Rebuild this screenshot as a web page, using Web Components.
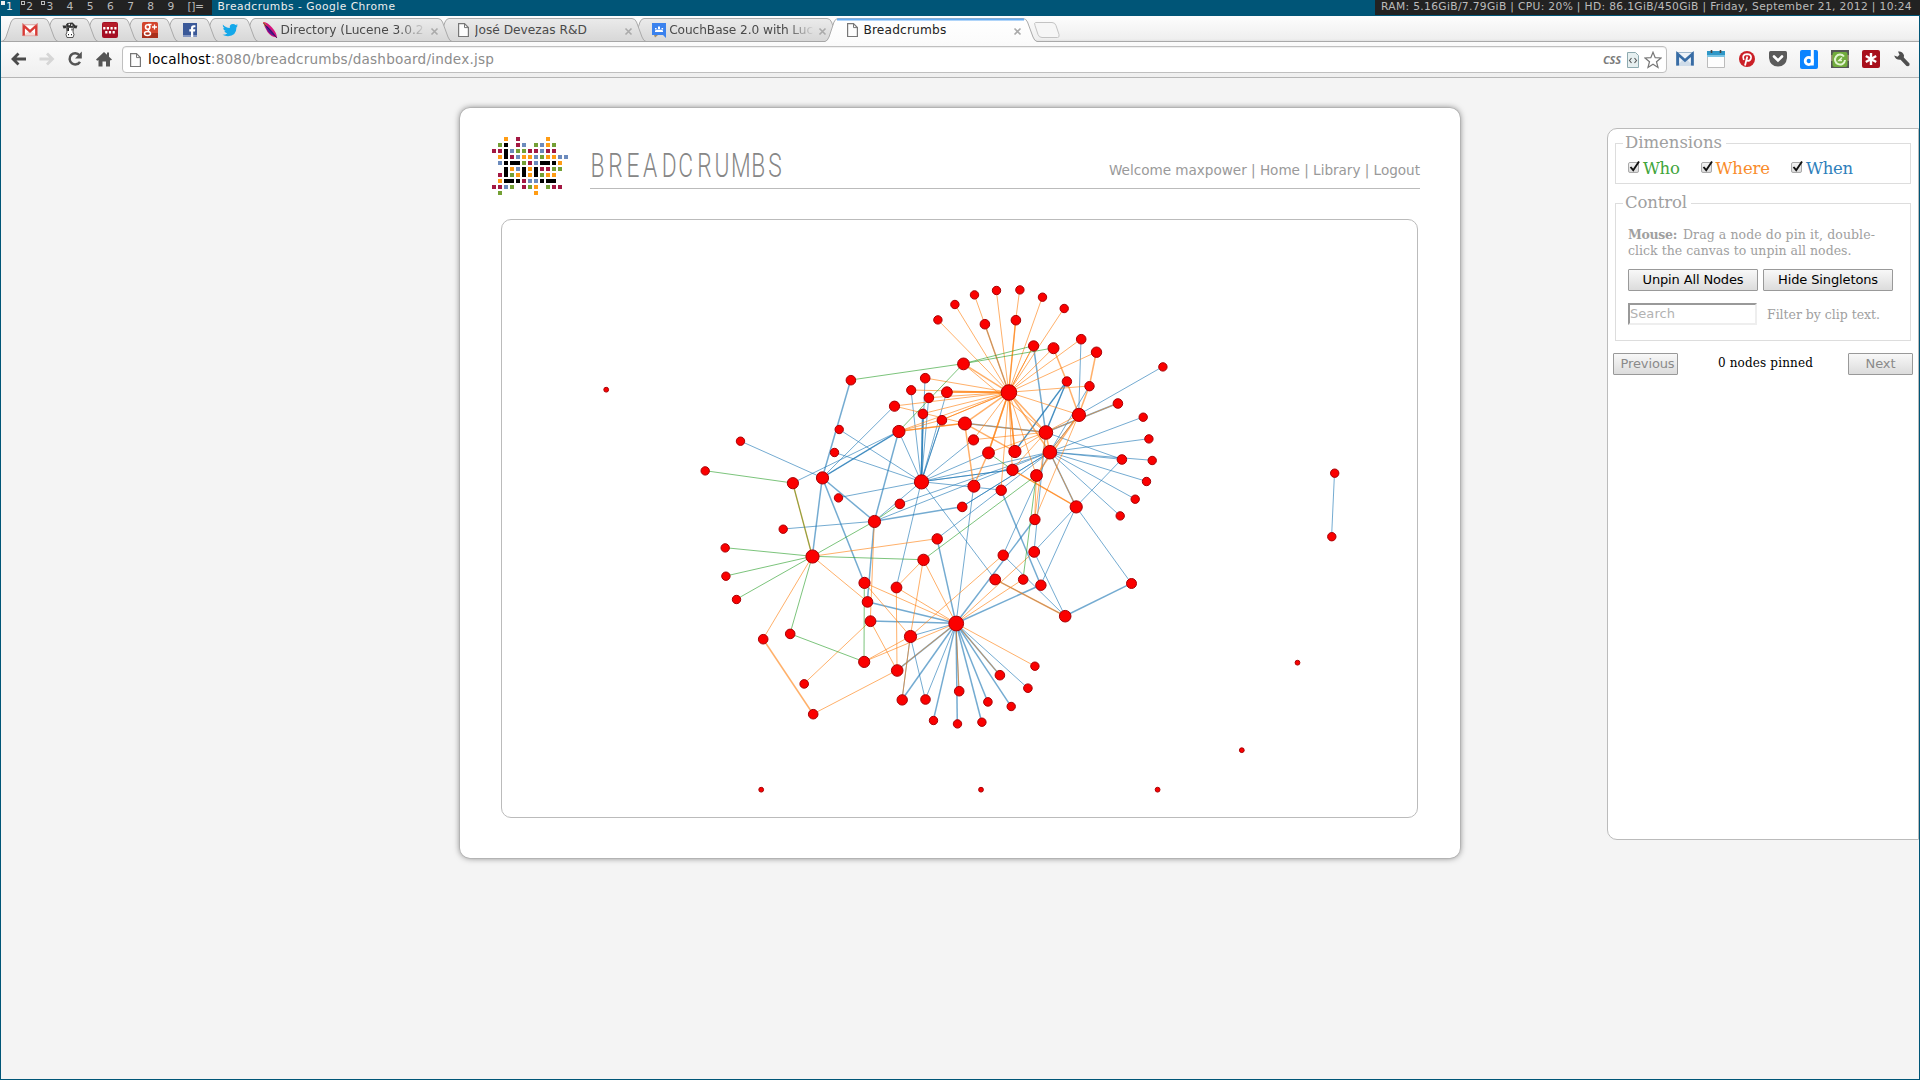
<!DOCTYPE html>
<html lang="en">
<head>
<meta charset="utf-8">
<title>Breadcrumbs</title>
<style>
html,body{margin:0;height:100%}
body{width:1920px;height:1080px;overflow:hidden;background:#057;font-family:"DejaVu Sans",sans-serif;display:flex;flex-direction:column}
</style>
</head>
<body>
<status-bar></status-bar>
<browser-window>
  <tab-strip slot="tabs">
    <browser-tab icon="gmail"></browser-tab>
    <browser-tab icon="cow"></browser-tab>
    <browser-tab icon="dots"></browser-tab>
    <browser-tab icon="gplus"></browser-tab>
    <browser-tab icon="facebook"></browser-tab>
    <browser-tab icon="twitter"></browser-tab>
    <browser-tab wide fade icon="feather"><fit-text w="143">Directory (Lucene 3.0.2</fit-text></browser-tab>
    <browser-tab wide icon="page"><fit-text w="112">José Devezas R&amp;D</fit-text></browser-tab>
    <browser-tab wide fade icon="group"><fit-text w="144">CouchBase 2.0 with Luc</fit-text></browser-tab>
    <browser-tab wide active icon="page"><fit-text w="83">Breadcrumbs</fit-text></browser-tab>
  </tab-strip>
  <tool-bar slot="tools"></tool-bar>
  <main-card>
    <bread-header slot="head"></bread-header>
    <node-graph></node-graph>
  </main-card>
  <side-panel></side-panel>
</browser-window>
<script>
const ICONS={
gmail:'<path fill="#fff" d="M1 3h14v11H1z"/><path fill="#f3d9d6" d="M2 13l6-5 6 5z"/><path fill="none" stroke="#d93b36" stroke-width="2.4" d="M1.7 14V3.6L8 9.3l6.3-5.7V14"/><path stroke="#d9908c" stroke-width=".8" d="M1 2.8h14M1 13.7h14"/>',
cow:'<path fill="#333" d="M4 2.500l1.500-1.500 5-.5 2 2 1 1.500-3 1-6 0z"/><path fill="#333" d="M.5 3.500l4 0v2.500l-3 .5zM15.500 3.500l-4 0v2.500l3 .5z"/><path fill="#fff" stroke="#444" stroke-width=".9" d="M4.500 5.500h7l-.5 4.500 1 2.500-1 3H5l-1-3 1-2.500z"/><path fill="#222" d="M5.200 6h1.800v3H5.200zM9.500 6.500h1v2h-1zM6 12h1v1.300H6zM9 12h1v1.300H9z"/><path fill="#fff" d="M6.500 1.800h1.500v1.500H6.500zM9 2.500h1.500v1.200H9z"/>',
dots:'<rect width="16" height="16" rx="2" fill="#a50f24"/><path fill="#c33" opacity=".4" d="M1 1h14v6H1z"/><path fill="#fff" d="M1.200 5h2.200v2.600H1.200zM4.800 5h2.200v2.600H4.800zM8.500 5h2.200v2.600H8.500zM12.300 5h2.200v2.600h-2.200zM3.200 9h2.200v2.600H3.200zM6.900 9h2.200v2.600H6.900zM10.600 9h2.200v2.600h-2.200z"/>',
gplus:'<rect width="16" height="16" rx="1.500" fill="#d3452d"/><path fill="#a9301c" d="M0 11h16v5H0z"/><g fill="none" stroke="#fff"><circle cx="5.700" cy="5" r="2.200" stroke-width="1.600"/><ellipse cx="5.500" cy="11.500" rx="3" ry="2" stroke-width="1.500"/><path stroke-width="1.300" d="M7.500 7.300q-2.500 1 0 2.500M6 2.500h3.500M10 5h5M12.500 2.500v5"/></g>',
facebook:'<path fill="#3b5998" d="M1 1h14v14H1z"/><path fill="#8295c0" d="M1 13h14v2H1z"/><path fill="#fff" d="M9 15V9.500H7.300V7.300H9V6q0-2.800 2.800-2.800h1.600v2.100h-1.200q-1 0-1 1v1h2.100l-.3 2.200h-1.800V15z"/>',
twitter:'<path fill="#14a8ea" d="M.8 2.500q2.800 3.400 7 3.500Q7.300 2 11 2q1.600 0 2.600 1l2-.8q-.3 1.200-1.300 1.800l1.600-.4-1.400 1.600Q14.300 14 6 14.200q-3.200 0-5.500-1.400 2.800.1 4.800-1.400-2.300-.3-3-2.300h1.400Q1.200 8.200 1.200 5.700l1.300.4Q.3 4.600.8 2.500z"/>',
feather:'<path d="M1 0q4-.3 9 5.500 4.500 5 5 10Q9 15 5.500 10 2.500 5 1 0z" fill="#d6127b"/><path d="M1 0q3 1 4 4l-2 1z" fill="#f08a24"/><path d="M2.500 2.500q6 3 11.500 12-5-1-8-5-2.500-4-3.500-7z" fill="#5a1694"/><path d="M1.500 1l13.500 15" stroke="#26134d" stroke-width=".8"/>',
page:'<path fill="#fdfdfd" stroke="#777" stroke-width="1.200" d="M2.600 1.600h5.900l3.900 3.900v9H2.600z"/><path fill="none" stroke="#777" d="M8.500 1.600v4h4"/>',
group:'<path fill="#3b82ee" d="M1 1h14v15l-3-3H1z"/><path fill="#a08d6b" d="M3 13h4l-3 2.500z"/><path fill="#fff" d="M4 8.500q4-2 8 0V10H4zM7 4.500h2v2.500H7zM4 6h1.600v1.600H4zM10.500 6h1.600v1.600h-1.600z"/>'
};
const def=(name,html,after)=>customElements.define(name,class extends HTMLElement{
  constructor(){super();const t=document.createElement('template');t.innerHTML=typeof html==='function'?html(this):html;this.attachShadow({mode:'open'}).append(t.content.cloneNode(true));}
  connectedCallback(){after&&after(this)}
});

/* Window manager bar */
def('status-bar',()=>`<style>
:host{display:flex;height:15px;margin-bottom:1px;flex:none;font:10.700px/11px "DejaVu Sans",sans-serif;color:#bbb;background:#057;justify-content:space-between}
.l{display:flex}.tags{display:flex;background:#222}
.tag{box-sizing:border-box;width:20.200px;text-align:center;padding:1px 1px 0 0;height:15px;background:#222;position:relative}
.sel{background:#057;color:#eee;width:20px}
.o::before{content:"";position:absolute;left:1px;top:1px;width:2px;height:2px;border:1px solid #bbb}
.sel.o::before{background:#eee;border-color:#eee}
.lay{padding:1px 8px 0 6px;width:16px}.t{padding:1px 0 0 6px;color:#eee}
.r{background:#222;padding:1px 8px 0 6px}
</style><div class="l"><div class="tags">${[1,2,3,4,5,6,7,8,9].map(n=>`<div class="tag ${n==1?'sel':''} ${n<4?'o':''}">${n}</div>`).join('')}<div class="lay"><fit-text w="16">[]=</fit-text></div></div><div class="t"><fit-text w="178">Breadcrumbs - Google Chrome</fit-text></div></div>
<div class="r"><fit-text w="531">RAM: 5.16GiB/7.79GiB | CPU: 20% | HD: 86.1GiB/450GiB | Friday, September 21, 2012 | 10:24</fit-text></div>`);

def('browser-window',`<style>
:host{display:flex;flex-direction:column;flex:1;margin:0 1px 1px;background:#f4f4f4;min-height:0}
.stage{display:flex;align-items:flex-start;padding-left:459px;gap:147px}
</style><slot name="tabs"></slot><slot name="tools"></slot><div class="stage"><slot></slot></div>`);

def('tab-strip',`<style>
:host{display:flex;height:26px;flex:none;padding-left:1px;background:linear-gradient(#fdfdfd,#efefef 23px,#e2e2e2 25px,#a9a9a9 25px);isolation:isolate;align-items:flex-end}
svg{display:block;margin:0 0 3px 12px}
</style><slot></slot><svg width="28" height="18"><path d="M2.500 1.500H19q3 0 4 3l3 9q.7 3-1.500 3H9q-3 0-4-3l-3-9q-1-3 .5-3z" fill="#f6f6f6" stroke="#c3c3c3"/></svg>`);

def('browser-tab',h=>{
 const a=h.hasAttribute('active'),w=h.hasAttribute('wide')?(a?212:210):56;
 const p=`M0 24.500Q2.500 24 4 20L9 5Q10.500 1.500 13 1.500H${w-14}Q${w-11} 1.500 ${w-9.5} 5L${w-4} 20Q${w-2.500} 24 ${w} 24.500`;
 return `<style>
:host{display:block;width:${w}px;height:25px;margin-right:${w>100?-15.700:-16}px;position:relative;flex:none;z-index:${a?30:0}}
.bg{position:absolute;inset:0;z-index:-1}
.c{display:flex;height:25px;box-sizing:border-box;padding:5px 0 0 20px}
.ic{width:16px;height:16px;flex:none}
.t{margin:1px 0 0 2.500px;width:145.500px;height:16px;overflow:hidden;font:12.200px/15px "DejaVu Sans",sans-serif;color:${a?'#222':'#4a4a4a'};white-space:nowrap;${h.hasAttribute('fade')?'-webkit-mask-image:linear-gradient(90deg,#000 118px,transparent 146px)':''}}
.x{width:9px;height:9px;margin:5px 0 0 ${a?4.500:3.500}px}
</style><svg class="bg" width="${w}" height="25"><defs><linearGradient id="g" x2="0" y2="1"><stop stop-color="${a?'#fff':'#ebebeb'}"/><stop offset="1" stop-color="${a?'#fbfbfb':'#d7d7d7'}"/></linearGradient></defs><path d="${p}${a?'V25H0z':'z'}" fill="url(#g)"/><path d="${p}" fill="none" stroke="#aaa"/>${a?`<path d="M12 2.500H${w-13}" stroke="#65acf3" stroke-width="2"/>`:`<path d="M0 24.500H${w}" stroke="#a6a6a6"/>`}</svg>
<div class="c"><svg class="ic" viewBox="0 0 16 16">${ICONS[h.getAttribute('icon')]}</svg>${w>100?`<div class="t"><slot></slot></div><svg class="x" viewBox="0 0 9 9"><path d="M1.500 1.500l6 6m0-6l-6 6" stroke="#aaa" stroke-width="1.600"/></svg>`:''}</div>`},
 e=>{if(!e.hasAttribute('active'))e.style.zIndex=20-[...e.parentNode.children].indexOf(e)});

def('tool-bar',`<style>
:host{display:flex;align-items:center;box-sizing:border-box;height:36px;flex:none;border-bottom:1px solid #b5b5b5;background:linear-gradient(#fbfbfb,#efefef);padding:0 7px 0 8px}
.nav{display:flex;gap:10.500px;margin-top:-1px;width:112px}
.box{box-sizing:border-box;display:flex;align-items:center;width:1545px;height:27px;border:1px solid #bfbfbf;border-radius:4px;background:#fff;padding:0 4px 0 5px;box-shadow:inset 0 1px 1px #eee;font:13.600px/20px "DejaVu Sans",sans-serif;color:#8c8c8c;margin-left:1px;flex:none}
b{font-weight:400;color:#000}.sp{flex:1}
.css{font:italic bold 11px/14px "Open Sans",sans-serif;color:#7b7b7b;margin-right:4px}
.ext{display:flex;gap:13px;margin-left:9px}
svg{flex:none;display:block}
</style><div class="nav">
<svg width="18" height="18" viewBox="0 0 18 18"><path d="M17 9H5M9.500 3.500L4 9l5.500 5.500" stroke="#4b4b4b" stroke-width="2.800" fill="none"/></svg>
<svg width="18" height="18" viewBox="0 0 18 18"><path d="M1.500 9h12M9 3.500L14.500 9 9 14.500" stroke="#d6d6d6" stroke-width="2.800" fill="none"/></svg>
<svg width="18" height="18" viewBox="0 0 18 18"><path d="M13.500 5.200A5.600 5.600 0 1 0 14 11.800" stroke="#555" stroke-width="2.500" fill="none"/><path fill="#555" d="M15.800 1.500v7H9z"/></svg>
<svg width="18" height="18" viewBox="0 0 18 18"><path d="M1 9.500l8-7.500 3 2.800V2.500h2v4.200l3 2.800-1.200 1L15 10v6.500h-4v-5H7.500v5H3.500V10l-1.300.8z" fill="#555"/></svg></div>
<div class="box"><svg width="16" height="16" viewBox="0 0 16 16">${ICONS.page}</svg><span style="margin:-1px 0 0 4px"><fit-text w="346"><b>localhost</b>:8080/breadcrumbs/dashboard/index.jsp</fit-text></span><span class="sp"></span><span class="css"><fit-text w="18">CSS</fit-text></span>
<svg width="16" height="18" viewBox="0 0 16 18"><path d="M2.500 1.500h8l3 3v12h-11z" fill="#e6eff0" stroke="#8eaab0"/><path d="M6.500 7L4.500 9.500l2 2.500m3-5l2 2.500-2 2.500" fill="none" stroke="#555" stroke-width="1.100"/></svg>
<svg width="18" height="18" viewBox="0 0 18 18" style="margin-left:3px"><path d="M9 1.200l2.200 5.500 5.800.3-4.500 3.700 1.500 5.800L9 13.300l-5 3.200 1.500-5.800L1 7l5.800-.3z" fill="#fff" stroke="#777" stroke-width="1.200"/></svg></div>
<div class="ext">
<svg width="18" height="18" viewBox="0 0 18 18"><path fill="#eef3f8" stroke="#9eb6cc" d="M.5 2.500h17v13H.5z"/><path d="M1 16l5.500-6L9 12l2.500-2L17 16z" fill="#cfdce9"/><path d="M1.700 15.500V4L9 10.500 16.300 4v11.500" fill="none" stroke="#386ca5" stroke-width="2.800"/></svg>
<svg width="18" height="18" viewBox="0 0 18 18"><path fill="#fdfdfd" stroke="#bbb" d="M.5 3.500h17v14H.5z"/><path fill="#2f97c7" d="M0 1h18v5H0z"/><path fill="#7cc4e3" d="M0 5h18v2H0z"/><path d="M4.500 0v3M13.500 0v3" stroke="#444" stroke-width="1.600"/></svg>
<svg width="18" height="18" viewBox="0 0 18 18"><circle cx="9" cy="9" r="8" fill="#cb2027"/><path d="M5.800 10Q3.500 4.500 9 4.200q4.500 0 4 3.700-.8 3.400-3.200 3-1-.2-1.200-1M9.300 6.500L7 15.500" stroke="#fff" stroke-width="1.800" fill="none"/></svg>
<svg width="18" height="18" viewBox="0 0 18 18"><path d="M0 2.500q0-1.500 1.500-1.500h15q1.500 0 1.500 1.500V8q-1 8.500-9 8.500T0 8z" fill="#5b5b5b"/><path d="M5 6.500l4 4 4-4" fill="none" stroke="#fff" stroke-width="2.600" stroke-linecap="round"/></svg>
<svg width="18" height="19" viewBox="0 0 18 19"><rect width="18" height="19" rx="2" fill="#0a84ff"/><path d="M12.300 0v15.500" stroke="#fff" stroke-width="3"/><circle cx="8.800" cy="11" r="3.600" fill="none" stroke="#fff" stroke-width="2.800"/></svg>
<svg width="18" height="18" viewBox="0 0 18 18"><path d="M0 0h18v18H0z" fill="#555"/><path d="M0 5h18v6H0z" fill="#987"/><rect x="1.500" y="2" width="15" height="15" rx="2" fill="#71ab3c"/><path d="M13 6.500a5 5 0 1 0 1 3.500" fill="none" stroke="#e2f4cf" stroke-width="2"/><path d="M11 10.500h-3l3-3" stroke="#e2f4cf" stroke-width="1.500" fill="none"/></svg>
<svg width="18" height="18" viewBox="0 0 18 18"><rect width="18" height="18" rx="2" fill="#a8101c"/><path d="M9 3v12M3.800 6l10.400 6M3.800 12l10.400-6" stroke="#fff" stroke-width="2.400"/></svg>
<svg width="18" height="18" viewBox="0 0 18 18"><path d="M1.200 5.500l3.300 1.300 2-2L5 1.500q4.500-.7 6 3.700L10.800 7.500l5.700 6q.8 2-1.300 2.800l-1.700-.3L7.600 9.700q-5.300.3-6.400-4.200z" fill="#4f4f4f"/></svg>
</div>`);

def('main-card',`<style>
:host{display:block;box-sizing:border-box;width:1000px;height:750px;margin-top:30px;background:#fff;border-radius:10px;box-shadow:0 0 0 .5px #aaa,0 0 6px #777;flex:none}
.b{padding:30px 0 0 41px}
</style><slot name="head"></slot><div class="b"><slot></slot></div>`);

const LOGO=['..O.M....O...','.GK.MB.GBOG..','MMKBGGMMBMM..','.OKMBOOBGOOBB','.BKKKGMBKKKO.','..KOBKOKMMGG.','.MKGOKOKGOO..','.OKKKMBBKKK..','MMBG.MGO.GMM.','.G.....O.....'];
const LC={O:'#ff9c14',M:'#a31843',G:'#74a035',B:'#6c8bbd',K:'#000'};
let cells='';
LOGO.forEach((r,y)=>[...r].forEach((c,x)=>{if(LC[c])cells+=`<rect x="${x*6}" y="${y*6}" width="4" height="4" fill="${LC[c]}"/>`}));
[[2,2,0,1],[3,4,1,0],[8,4,1,0],[2,5,0,1],[5,5,0,1],[7,5,0,1],[2,7,1,0],[9,7,1,0]].forEach(([x,y,a,b])=>cells+=`<rect x="${x*6}" y="${y*6}" width="${4+6*a}" height="${4+6*b}"/>`);
def('bread-header',`<style>
:host{display:flex;height:81px;padding-left:32px;align-items:flex-start}
.logo{margin-top:29px;flex:none}
.r{box-sizing:border-box;display:flex;justify-content:space-between;width:830px;height:81px;margin-left:18px;border-bottom:1px solid #bbb}
.t{margin-top:30px;overflow:visible}
.n{font:13.600px/20px "DejaVu Sans",sans-serif;color:#999;margin-top:52px}
text{font:300 32.500px "Roboto","Open Sans",sans-serif;fill:#868686}
</style><svg class="logo" width="80" height="60">${cells}</svg><div class="r"><svg class="t" width="210" height="50"><text transform="translate(.5 39) scale(.7 1)" x="0 25.500 51.400 75 101.800 125.500 152.500 177 200.800 229.500 254">BREADCRUMBS</text></svg><div class="n"><fit-text w="311">Welcome maxpower | Home | Library | Logout</fit-text></div></div>`);

/* Graph data: id, x, y, radius */
const NODES=`T1 937.7 319.7 4.4,T2 954.7 304.3 4.4,T3 974.3 294.7 4.4,T4 996.3 290.3 4.4,T5 1019.7 289.7 4.4,T6 1042.3 297 4.4,T7 1064 308.3 4.4,U1 984.7 324 5,U2 1015.700 320 5,V1 1033.400 345.700 5.300,V2 1053.300 348 5.700,V3 1081 339 5,V4 1096.300 352 5.400,P 963.300 363.700 6.100,H 1008.700 392.300 8,L1 925 378 5,L2 911 390 4.800,L3 928.700 397.700 5,L4 946.700 392 5.600,L5 894.300 406 5.300,L6 922.700 413.700 5,L7 941.700 420 5,Q 964.700 423.300 6.700,R 898.700 431.300 6.300,S1 973.300 439.700 5.300,S2 988.300 452.700 6.100,S3 1014.700 451.300 6.300,J 1045.700 432.300 7,K 1049.700 452 7,M 1078.700 414.700 6.800,N1 1066.700 381.300 4.900,N2 1089.300 386 4.900,E0 1162.700 366.700 4.400,E1 1117.700 403.300 5,E2 1143 417 4.400,E3 1148.700 438.700 4.400,E4 1152 460.300 4.400,E5 1121.700 459.300 5,E6 1146.300 481.300 4.400,E7 1135 499 4.400,E8 1120 515.700 4.400,C1 1012.300 469.700 5.900,C2 1036.300 475.300 6.100,B 921.300 481.700 7.300,D 973.700 486 6.200,D2 1001 490 5.400,F 899.700 503.700 5,G 962 506.700 5,X 1076 506.700 6.300,Y 874.300 521.300 6.300,Z 1034.700 519.300 5.400,W1 850.700 380 5,W2 839 429.300 4.400,W3 834.300 452.300 4.400,W 822.300 477.700 6.300,A 792.700 483 5.800,A1 740.300 441 4.400,A2 705 470.700 4.400,W4 838.300 497.700 4.400,Y1 783 529 4.400,g1 725 547.700 4.400,I 812.300 556.300 6.800,g2 725.700 576 4.400,g3 736.300 599.300 4.400,a 937 538.700 5.400,b 923.300 559.700 5.900,c 864.300 582.700 5.800,d 896.300 587.300 5.600,e 867.300 601.700 5.500,f 870.300 621 5.600,g 910.300 636.300 6.300,O 956 623.300 7.600,h 864 661.700 5.800,i 897 670.300 6,j 790 633.700 5,k 763 639 5,l 804 683.700 4.500,m 813 714 5,n1 902 699.700 5.400,n2 925.300 699.300 5,n3 959 691 5,n4 933.300 720.300 4.400,n5 957.300 723.700 4.400,n6 981.700 722 4.400,n7 987.700 701.700 4.500,n8 1011 706.300 4.400,n9 999.700 675 5,n10 1027.700 688 4.500,n11 1034.700 666 4.400,p 1003 555 5.400,q 1034 551.700 5.600,r 995 579.300 5.600,s 1023 579.300 5,t 1040.700 585 5.400,u 1065 616 6,v 1131.300 583.300 5.200,z1 606 389.500 2.600,z2 1334.500 473 4.400,z3 1331.600 536.500 4.400,z4 1297.300 662.500 2.600,z5 1241.600 750 2.600,z6 761 789.500 2.600,z7 980.800 789.500 2.600,z8 1157.400 789.500 2.600`;
/* Edge lists; a trailing * marks a heavier link */
const EDGES={
'#1f77b4':'V1-J* N1-J* N1-J N1-S3* N1-S3 V3-M E0-M E1-J* E2-K E3-K E4-K E5-K E6-K E7-K E8-K J-E5 K-X* X-E5 N2-K M-K Q-J* U1-H B-L1 B-L2 B-L3 B-L4 B-L6* B-L6* B-L7 B-L7 B-R B-S1 B-S2 B-C1 B-C1 B-D2 B-Y B-W2 B-W3 B-W4 B-d B-r Y-G* Y-K Y-W* Y-R* Y-Y1 Y-e* K-F K-G K-a K-B D-O D2-t* Z-O* J-q K-p X-q X-t X-v v-u* q-u p-u r-u t-O* a-O* e-O* f-O* g-O g-n1 g-n2 O-n1* O-n2 O-n4* O-n5* O-n3 O-n6* O-n7* O-n8* O-n9* O-n10 O-i* W-I* W-A1 W-W1* W-c* W-R* W-R A-R W-L5 G-K z2-z3',
'#ff7f0e':'H-T1 H-T2 H-T4 H-T6 H-T7 T3-U1 H-U1* T5-U2 H-U2* H-U2 H-V1 H-V2 H-V3 H-V4 H-N2 H-M H-P* P-J H-L1 H-L2 H-L3 H-L4* H-L4* H-L5 H-L6 H-L7 H-R L7-H R-L7 H-Q* H-S1 H-S2* H-S2* H-S3* H-S3* H-C1 H-J* H-K* H-C2 H-D2 S2-D* Q-D* Q-S3* Q-R* R-Q L5-Q J-S1 J-S2 J-C1 J-S3 J-K* J-M V2-N1* N1-M* V4-N2* N2-M* M-C2* M-K M-Z K-X C1-X* C1-X C2-Z J-Z E1-J I-a I-e I-k k-m* m-i b-O b-d b-g d-O d-i c-O c-g f-i f-l g-h O-h g-p O-q O-s r-u* O-n11 O-i g-n1 O-n3 O-n9 Y-f A-I* Q-J V1-H',
'#2ca02c':'W1-P P-V1 P-V2 P-R A-A2 A-I Y-I Y-F I-b I-g1 I-g2 I-g3 I-j j-h h-c C2-b C2-s S2-C1'
};
const N={};NODES.split(',').forEach(s=>{const [k,x,y,r]=s.split(' ');N[k]=[+x,+y,+r]});
let gs='';
for(const c in EDGES)for(const q of EDGES[c].split(' ')){const hv=q.endsWith('*');const [s,t]=q.replace('*','').split('-');
 gs+=`<line x1="${N[s][0]}" y1="${N[s][1]}" x2="${N[t][0]}" y2="${N[t][1]}" stroke="${c}" stroke-width="${hv?1.500:1}"/>`}
def('node-graph',`<style>
:host{display:block;box-sizing:border-box;width:917px;height:599px;border:1px solid #bbb;border-radius:10px}
svg{display:block}line{stroke-opacity:.62}circle{fill:#fb0000;stroke:#a80004;stroke-width:1}
</style><svg width="915" height="597" viewBox="502 220 915 597">${gs}${Object.values(N).map(n=>`<circle cx="${n[0]+.2}" cy="${n[1]+.2}" r="${n[2]-.2}"/>`).join('')}</svg>`);

def('tick-box',`<style>:host{display:block;width:12px;height:12px;flex:none}svg{display:block;overflow:visible}</style>
<svg width="12" height="12"><defs><linearGradient id="g" x2="0" y2="1"><stop stop-color="#f6f6f6"/><stop offset="1" stop-color="#d8d8d8"/></linearGradient></defs><rect x=".5" y=".5" width="10" height="10" rx="1.500" fill="url(#g)" stroke="#aaa"/><path d="M2.500 5l2.700 3.200L11 -.5" fill="none" stroke="#111" stroke-width="1.900"/></svg>`);
def('push-button',`<style>:host{display:flex;box-sizing:border-box;height:22px;border:1px solid #999;border-radius:1px;background:linear-gradient(#f8f8f8,#dcdcdc);align-items:center;justify-content:center;font:13px/20px "DejaVu Sans",sans-serif;color:#000;flex:none}:host([disabled]){color:#8a8a8a}</style><slot></slot>`);
def('side-panel',`<style>
:host{display:block;box-sizing:border-box;width:312px;height:712px;margin-top:50px;border:1px solid #bbb;border-radius:10px 0 0 10px;background:#fff;flex:none;padding:4px 5px 0;font-family:"DejaVu Serif",serif;color:#a0a0a0}
fieldset{box-sizing:border-box;margin:0 0 9px 2px;width:296px;min-width:0;height:51px;border:1px solid #ddd;padding:0 0 0 12px}
.f2{height:148px;margin-bottom:12px}
legend{margin-left:-5px;padding:0 4px 0 2px;font-size:16.500px;line-height:20px;height:20px}
.row{display:flex;align-items:center}
.dims{height:30px;gap:21px;font-size:16.500px}.dims div{display:flex;align-items:center;gap:3px}
.p{padding-top:14px;font-size:12.500px;line-height:16px}
.p div{height:16px;display:flex;gap:6px}
.bt{margin-top:10px;gap:5px}.se{margin-top:12px}
.in{box-sizing:border-box;width:129px;height:22px;border:2px solid;border-color:#999 #eee #eee #999;font:13px/17px "DejaVu Sans",sans-serif;color:#b2b2b2}
.fi{font-size:12.500px;margin-left:10px}
.ft{justify-content:space-between;font-size:12px;color:#000}
</style>
<fieldset><legend><fit-text w="97">Dimensions</fit-text></legend><div class="row dims">
<div style="color:#3fa53c"><tick-box></tick-box><fit-text w="36.500">Who</fit-text></div><div style="color:#f98c2b"><tick-box></tick-box><fit-text w="54.500">Where</fit-text></div><div style="color:#2f80bb"><tick-box></tick-box><fit-text w="47">When</fit-text></div></div></fieldset>
<fieldset class="f2"><legend><fit-text w="62">Control</fit-text></legend>
<div class="p"><div><b><fit-text w="49">Mouse:</fit-text></b><fit-text w="192">Drag a node do pin it, double-</fit-text></div><div><fit-text w="223.500">click the canvas to unpin all nodes.</fit-text></div></div>
<div class="row bt"><push-button style="width:130px"><fit-text w="101">Unpin All Nodes</fit-text></push-button><push-button style="width:130px"><fit-text w="100">Hide Singletons</fit-text></push-button></div>
<div class="row se"><div class="in"><fit-text w="45">Search</fit-text></div><div class="fi"><fit-text w="113">Filter by clip text.</fit-text></div></div></fieldset>
<div class="row ft"><push-button disabled style="width:65px"><fit-text w="54" style="margin-left:4px">Previous</fit-text></push-button><fit-text w="95" style="margin:-3px 0 0 5px">0 nodes pinned</fit-text><push-button disabled style="width:65px"><fit-text w="30">Next</fit-text></push-button></div>`);

/* Inline text tracked to a given advance width */
def('fit-text','<style>:host{display:inline-block;white-space:nowrap}</style><slot></slot>',e=>{
 e.style.letterSpacing='0px';
 const w=e.getBoundingClientRect().width,n=e.textContent.length,t=+e.getAttribute('w');
 if(w>0)e.style.letterSpacing=((t-w)/n)+'px';
});
</script>
</body>
</html>
